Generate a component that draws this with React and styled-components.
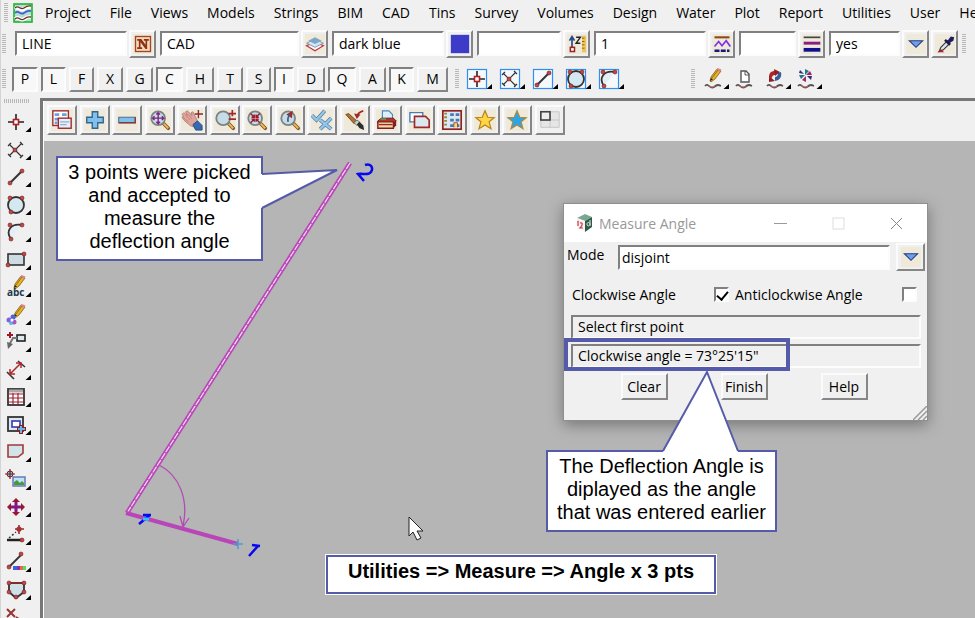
import React from 'react'
import styled, { createGlobalStyle, css } from 'styled-components'

const GlobalStyle = createGlobalStyle`
  * { box-sizing: border-box; }
  body {
    margin: 0;
    overflow: hidden;
    background: #f0f0f0;
    color: #000;
    font-family: 'Open Sans', 'Noto Sans', sans-serif;
    font-size: 14px;
  }
  button, input, select { font: inherit; color: inherit; }
`

const navy = '#555ba8'

const raised = css`
  border: 2px solid;
  border-color: #fbfbfb #868686 #868686 #fbfbfb;
  background: #f0f0f0;
`

const sunken = css`
  border: 2px solid;
  border-color: #808080 #fcfcfc #fcfcfc #808080;
`

const Screen = styled.div`
  height: 100vh;
  display: flex;
  flex-direction: column;
  border-left: 1px solid #d4d4d4;
`

const Grip = styled.span`
  flex: none;
  display: block;
  width: ${(p) => (p.$flat ? '25px' : '4px')};
  height: ${(p) => (p.$flat ? '4px' : '20px')};
  background: repeating-linear-gradient(${(p) => (p.$flat ? '90deg' : '180deg')}, #b8b8b8 0 1px, #f0f0f0 1px 2px);
`

const MenuBar = styled.nav`
  display: flex;
  align-items: center;
  height: 25px;
  padding-left: 3px;
  overflow: hidden;
`

const Logo = styled.svg`
  flex: none;
  margin: 0 12px 0 5px;
`

const MenuLink = styled.a`
  flex: none;
  margin-right: 19px;
  color: #000;
  text-decoration: none;
  line-height: 20px;
  white-space: nowrap;
`

const FieldBar = styled.div`
  display: flex;
  align-items: center;
  height: 37px;
  padding-left: 1px;
`

const FieldGroup = styled.div`
  flex: none;
  display: flex;
  align-items: center;
  gap: 2px;
  margin-left: 4px;
  &:first-of-type { margin-left: 9px; }
`

const Field = styled.input`
  ${sunken}
  width: ${(p) => p.$w};
  height: 25px;
  padding: 0 5px;
  background: #fff;
  outline: none;
`

const SelectField = styled.select`
  ${sunken}
  appearance: none;
  flex: ${(p) => (p.$w ? 'none' : '1')};
  width: ${(p) => p.$w || 'auto'};
  height: 25px;
  padding: 0 ${(p) => (p.$tight ? '2px' : '5px')};
  background: #fff;
  border-radius: 0;
  outline: none;
`

const IconButton = styled.button`
  ${raised}
  flex: none;
  display: flex;
  align-items: center;
  justify-content: center;
  width: 27px;
  height: 28px;
  padding: 0;
`

const KeyBar = styled.div`
  display: flex;
  align-items: center;
  height: 34px;
  padding-left: 1px;
`

const Keys = styled.div`
  display: flex;
  gap: 3px;
  margin: 0 7px 0 6px;
`

const Key = styled.button`
  ${raised}
  width: ${(p) => p.$w}px;
  height: 25px;
  padding: 0;
  line-height: 20px;
  &[aria-pressed='true'] {
    ${sunken}
    background: #f8f8f8;
  }
`

const ToolButton = styled.button`
  flex: none;
  display: flex;
  padding: 0;
  border: 0;
  background: none;
`

const SnapTools = styled.div`
  display: flex;
  gap: 5px;
  margin: 0 66px 0 6px;
`

const EditTools = styled.div`
  display: flex;
  gap: 3px;
  margin-left: 7px;
`

const Body = styled.div`
  flex: 1;
  display: flex;
  min-height: 0;
`

const SideBar = styled.aside`
  flex: none;
  width: 39px;
  padding: 3px 0 0 3px;
  overflow: hidden;
`

const SideTools = styled.div`
  display: flex;
  flex-direction: column;
  padding-top: 7px;

  ${ToolButton} { margin-bottom: 4px; }
  ${ToolButton}:nth-child(even) { margin-bottom: 3px; }
`

const ViewWindow = styled.main`
  flex: 1;
  display: flex;
  flex-direction: column;
  min-width: 0;
  margin-top: 2px;
  border: 3px solid #777;
  border-width: 3px 0 0 3px;
`

const ViewBar = styled.div`
  display: flex;
  height: 40px;
  padding: 4px 0 0 3px;
  border-left: 1px solid #fff;

  button { width: 30px; height: 30px; margin-right: 3px; }
  button:nth-child(even) { margin-right: 2px; }
`

const Canvas = styled.div`
  position: relative;
  flex: 1;
  border-left: 1px solid #fff;
  background: #b5b5b5;
`

const Drawing = styled.svg`
  position: absolute;
  left: 0;
  top: 0;
  width: 100%;
  height: 100%;
`

const Callout = styled.div`
  position: absolute;
  left: ${(p) => p.$x}px;
  top: ${(p) => p.$y}px;
  width: ${(p) => p.$w}px;
  padding: 3px 0 6px;
  border: 2px solid ${navy};
  background: #fff;
  color: #000;
  font: 20px/23px 'Liberation Sans', Arial, sans-serif;
  text-align: center;
`

const Pointer = styled.svg`
  position: absolute;
  left: ${(p) => p.$x}px;
  top: ${(p) => p.$y}px;
`

const Caption = styled(Callout)`
  padding: 1px 0 8px;
  outline: 1px solid #fff;
  font-weight: bold;
  line-height: 26px;
`

const Dialog = styled.section`
  position: absolute;
  left: 519px;
  top: 62px;
  width: 365px;
  border: 1px solid #8e8e8e;
  background: #f0f0f0;
  box-shadow: 0 4px 14px rgba(0, 0, 0, 0.35);
`

const TitleBar = styled.header`
  display: flex;
  align-items: center;
  height: 38px;
  padding-left: 12px;
  background: #fff;
  color: #999;
`

const Title = styled.h1`
  flex: 1;
  margin: 0 0 0 6px;
  font-size: 14px;
  font-weight: 400;
`

const WindowButton = styled.button`
  display: flex;
  justify-content: center;
  width: 58px;
  padding: 0;
  border: 0;
  background: none;
`

const ModeRow = styled.div`
  display: flex;
  align-items: center;
  gap: 6px;
  padding: 1px 2px 0 3px;

  label { width: 45px; padding-bottom: 6px; }
  button { width: 29px; }
`

const CheckRow = styled.div`
  display: flex;
  align-items: center;
  height: 44px;
  padding: 2px 10px 0 8px;
`

const CheckItem = styled.label`
  display: flex;
  align-items: center;
  justify-content: space-between;
  width: ${(p) => p.$w};
  margin-right: 6px;
  &:last-child { flex: 1; margin-right: 0; }
`

const Check = styled.input`
  ${sunken}
  appearance: none;
  width: 15px;
  height: 15px;
  margin: 0;
  background: #fff;
  &:checked::after {
    content: '';
    display: block;
    width: 5px;
    height: 9px;
    margin: 0 0 0 3px;
    border: solid #000;
    border-width: 0 2px 2px 0;
    transform: rotate(40deg);
  }
`

const Status = styled.output`
  ${sunken}
  display: block;
  height: 24px;
  margin: 0 6px 5px 7px;
  padding-left: 5px;
  line-height: 20px;
`

const Actions = styled.div`
  display: flex;
  justify-content: center;
  gap: 53px;
  padding: 0 3px 20px 0;
`

const ActionButton = styled.button`
  ${raised}
  width: 47px;
  height: 27px;
  padding: 0;
`

const Highlight = styled.div`
  position: absolute;
  left: 520px;
  top: 197px;
  width: 226px;
  height: 33px;
  border: 4px solid ${navy};
`

const ResizeCorner = styled.svg`
  position: absolute;
  right: 0;
  bottom: 0;
`

/* ---- icon drawings ---- */

const Dot = ({ x, y }) => <circle cx={x} cy={y} r="2" fill="#b84a4a" stroke="#7b1818" strokeWidth="0.6" />

const Glass = () => (
  <>
    <path d="M15 15l6 6" stroke="#8a5a20" strokeWidth="4" strokeLinecap="round" />
    <path d="M16 16l5 5" stroke="#e8b860" strokeWidth="2" />
    <circle cx="10" cy="10" r="7.500" fill="#c6dce6" stroke="#7b8486" strokeWidth="2" />
  </>
)

const Wave = () => (
  <>
    <path d="M3 19c3-4 5 4 9 1s5-2 7-1" stroke="#555" strokeWidth="1.800" fill="none" />
    <path d="M6 19c2 0 4 2 7 0" stroke="#d66" strokeWidth="1" fill="none" />
  </>
)

const Pencil = () => (
  <>
    <path d="M8 14l1-4 6-8 4 2-6 8-4 3z" fill="#e7b32b" stroke="#7c5b12" strokeWidth="0.8" />
    <path d="M14 3l1.500-2 4 1.500-1.500 2.500z" fill="#d9858b" />
    <path d="M10 11l6-8" stroke="#9a6d10" />
    <path d="M8 14l1-3 2 1.500z" fill="#222" />
  </>
)

const shapes = {
  point: (
    <>
      <path d="M12 4v16M4 12h16" stroke="#222" strokeWidth="1.600" />
      <rect x="9.500" y="9.500" width="5" height="5" fill="#fff" stroke="#b02020" strokeWidth="1.600" />
    </>
  ),
  cross: (
    <>
      <path d="M5 6l13 13M18 5L5 18M4 8l3-3M16 4l3 3M4 16l3 3M16 20l3-3" stroke="#333" strokeWidth="1.200" />
      <Dot x={11} y={12} />
    </>
  ),
  line: (
    <>
      <path d="M6 18L18 6" stroke="#333" strokeWidth="2" />
      <Dot x={6} y={18} />
      <Dot x={18} y={6} />
    </>
  ),
  circle: (
    <>
      <circle cx="12" cy="12" r="8" fill="#d5e7f0" stroke="#333" strokeWidth="1.800" />
      <Dot x={6} y={5} />
      <Dot x={18} y={5} />
      <Dot x={7} y={19} />
    </>
  ),
  arc: (
    <>
      <path d="M7 19C1 11 7 3 18 5" stroke="#333" strokeWidth="1.800" fill="#e3eff5" />
      <Dot x={6} y={5} />
      <Dot x={18} y={5} />
      <Dot x={7} y={19} />
    </>
  ),
  rect: (
    <>
      <rect x="4" y="6" width="16" height="11" fill="#cbdde2" stroke="#333" strokeWidth="1.600" />
      <Dot x={20} y={6} />
      <Dot x={4} y={17} />
    </>
  ),
  text: (
    <>
      <g transform="translate(2 -1)"><Pencil /></g>
      <text x="3" y="21" fontSize="10" fontWeight="700" fontFamily="Open Sans, sans-serif" fill="#24384c">abc</text>
    </>
  ),
  paint: (
    <>
      <g transform="translate(2 0)"><Pencil /></g>
      <circle cx="5" cy="17" r="2.500" fill="#8a5be0" />
      <circle cx="9" cy="14" r="2.500" fill="#4565d8" />
      <circle cx="10" cy="19" r="2.500" fill="#b050c8" />
      <circle cx="7" cy="20" r="2" fill="#50b8e0" />
      <circle cx="8" cy="17" r="1.500" fill="#fff" />
    </>
  ),
  leader: (
    <>
      <path d="M6 2v6M3 5h6" stroke="#a01828" strokeWidth="2" />
      <rect x="13" y="5" width="8" height="6" fill="#dceaf0" stroke="#222" strokeWidth="1.600" />
      <path d="M13 8H9l-4 7" stroke="#777" strokeWidth="2" fill="none" />
      <path d="M3 12l1 7 5-5z" fill="#666" />
    </>
  ),
  measure: (
    <>
      <path d="M3 14l7 7M14 3l7 6" stroke="#333" strokeWidth="1.600" />
      <path d="M7 15l9-9M6 11v5h5M12 5h5v5" stroke="#b02828" strokeWidth="1.500" fill="none" />
    </>
  ),
  table: (
    <>
      <rect x="4" y="4" width="16" height="16" fill="#fff" stroke="#333" strokeWidth="1.800" />
      <path d="M5 6h14" stroke="#aaa" strokeWidth="3" />
      <path d="M4 9h16M4 13h16M4 17h16M9 8v12M14 8v12" stroke="#a02030" strokeWidth="1.200" />
    </>
  ),
  insert: (
    <>
      <rect x="4" y="4" width="15" height="14" fill="#dce9f2" stroke="#333" strokeWidth="1.800" />
      <rect x="8" y="8" width="8" height="6" fill="#fff" stroke="#3838b0" strokeWidth="1.600" />
      <path d="M17 12v9M13 16h9" stroke="#8a2020" strokeWidth="4" />
      <path d="M17 13v7M14 16h7" stroke="#6db4e6" strokeWidth="2" />
    </>
  ),
  polygon: <path d="M4 5h15v8l-5 4H4z" fill="#d3e3ea" stroke="#a03a3a" strokeWidth="1.600" />,
  image: (
    <>
      <circle cx="6" cy="6" r="3" fill="#8ac4e0" stroke="#7a2222" />
      <path d="M6 1v10M1 6h10" stroke="#7a2222" strokeWidth="1.200" />
      <rect x="9" y="9" width="12" height="9" fill="#bfe3f5" stroke="#6a78b8" strokeWidth="1.500" />
      <path d="M10 17v-3l3-2 3 3 2-2 2 2v2z" fill="#479a3a" />
    </>
  ),
  move: (
    <>
      <path d="M12 5v14M5 12h14" stroke="#801880" strokeWidth="3" />
      <path d="M12 3l4 4H8zM12 21l4-4H8zM3 12l4-4v8zM21 12l-4-4v8z" fill="#9c1830" />
    </>
  ),
  snap: (
    <>
      <path d="M15 2v9M11 6h9" stroke="#a02828" strokeWidth="1.600" />
      <circle cx="15" cy="6" r="2" fill="none" stroke="#a02828" strokeWidth="1.200" />
      <path d="M5 15l7-6" stroke="#333" strokeWidth="1.500" strokeDasharray="2 2" />
      <path d="M3 17h16" stroke="#222" strokeWidth="2.500" />
      <Dot x={18} y={17} />
    </>
  ),
  colour: (
    <>
      <path d="M5 17L17 5" stroke="#333" strokeWidth="1.800" />
      <Dot x={5} y={17} />
      <Dot x={17} y={4} />
      <path d="M9 18h4" stroke="#3068e0" strokeWidth="4" />
      <path d="M13 18h3" stroke="#9428b0" strokeWidth="4" />
      <path d="M16 18h3" stroke="#f06840" strokeWidth="4" />
      <path d="M19 18h3" stroke="#50e060" strokeWidth="4" />
    </>
  ),
  shield: (
    <>
      <path d="M5 5h15v9l-8 6-7-6z" fill="#cfe1e8" stroke="#333" strokeWidth="1.800" />
      <path d="M4 5h16" stroke="#a02828" strokeWidth="1.500" />
      <Dot x={5} y={5} /><Dot x={20} y={5} /><Dot x={20} y={14} /><Dot x={12} y={19} /><Dot x={5} y={14} />
    </>
  ),
  remove: <path d="M3 4l8 8M11 4l-8 8M12 12l3 2" stroke="#963434" strokeWidth="2" />,
  drawWave: (<><Pencil /><Wave /></>),
  pageWave: (
    <>
      <path d="M8 4h5l3 3v8H8z" fill="#fff" stroke="#555" strokeWidth="1.400" />
      <path d="M12 4v4h4" stroke="#555" fill="none" />
      <Wave />
    </>
  ),
  cycleWave: (
    <>
      <path d="M5 10c0-4 2-6 6-6v4c-2 0-3 1-3 3z" fill="#a82828" />
      <path d="M17 5c1 5-1 8-6 9v-4c2 0 3-2 3-4z" fill="#355e9c" />
      <path d="M10 2l6 3-5 4z" fill="#902020" />
      <path d="M5 9l6 5-6 1z" fill="#902020" />
      <Wave />
    </>
  ),
  fanWave: (
    <>
      <path d="M10 8V2l4 2z" fill="#1a7a8a" /><path d="M11 8h6l-2-4z" fill="#a02860" />
      <path d="M11 9v6l-4-2z" fill="#a02860" /><path d="M10 8H4l2 4z" fill="#1a7a8a" />
      <path d="M12 9l4 4 1-4zM9 7L5 3 4 6z" fill="#302878" />
      <Wave />
    </>
  ),
}

const Tool = ({ name, box, menu = true }) => (
  <ToolButton aria-label={name}>
    <svg width="28" height="24" viewBox="0 0 28 24" fill="none">
      {box && <rect x="2.500" y="2.500" width="19" height="19" fill="#f6f9fc" stroke="#2f8ff0" strokeWidth="1.200" />}
      {shapes[name]}
      {menu && <path d="M27 17v5h-5.500z" fill="#000" />}
    </svg>
  </ToolButton>
)

const star = 'M12 2l3 7 7 .5-5.500 4.500 2 7.500-6.500-4-6.500 4 2-7.500L2 9.500 9 9z'

const viewIcons = {
  menus: (
    <>
      <rect x="2" y="2" width="17" height="16" fill="#fff" stroke="#a02828" strokeWidth="1.500" />
      <path d="M4 6h5M12 6h5M4 11h4M4 15h3" stroke="#6ba0d8" strokeWidth="3" />
      <rect x="8" y="10" width="14" height="11" fill="#e5f0fa" stroke="#a02828" strokeWidth="1.500" />
      <path d="M10 14h10M10 17h7" stroke="#8fb0d4" strokeWidth="1.500" />
    </>
  ),
  add: <path d="M9 3h6v6h6v6h-6v6H9v-6H3V9h6z" fill="#80c0ec" stroke="#34648c" strokeWidth="1.500" />,
  subtract: (<><path d="M3 9h18v6H3z" fill="#80c0ec" stroke="#4a7090" strokeWidth="1.200" /><path d="M3 15h18V9" stroke="#8a3838" strokeWidth="1.500" /></>),
  fit: (<><Glass /><path d="M10 4v12M4 10h12M8 6l2-2 2 2M8 14l2 2 2-2M6 8l-2 2 2 2M14 8l2 2-2 2" stroke="#802080" strokeWidth="1.500" /></>),
  pan: (
    <>
      <path d="M1 6l2-2 4 3-2-4 2-1 5 5-1-3 2-1 4 8 2 4-4 5-5-2-6-5-3-4 2-1z" fill="#e0a49c" stroke="#a87068" strokeWidth="0.800" />
      <path d="M5 7l5 5M8 6l4 5M2 9l6 5" stroke="#b87c72" strokeWidth="0.800" />
      <path d="M13 17l5-4 5 5v5h-7z" fill="#346ab0" stroke="#234a80" />
      <path d="M19 1v9M15 5.500h9" stroke="#8a2828" strokeWidth="1.500" />
    </>
  ),
  zoom: (<><Glass /><path d="M20 1v7M16 5h8M16 11h8" stroke="#a02828" strokeWidth="1.800" /></>),
  shrink: (<><Glass /><path d="M5 5l4 4M15 5l-4 4M5 15l4-4M15 15l-4-4M6 9h3V6M14 9h-3V6M6 11h3v3M14 11h-3v3" stroke="#a01828" strokeWidth="1.500" /></>),
  previous: (<><Glass /><path d="M8 6l7-4-1 8z" fill="#a02828" /><path d="M12 6c-2 2-3 4-2 8" stroke="#355e8c" strokeWidth="1.800" /></>),
  toggles: (<><path d="M1 7l5 5 9-10" stroke="#587898" strokeWidth="4" /><path d="M1 7l5 5 9-10" stroke="#8ec8f0" strokeWidth="2.500" /><path d="M10 12l12 10M22 10L10 22" stroke="#587898" strokeWidth="4" /><path d="M10 12l12 10M22 10L10 22" stroke="#8ec8f0" strokeWidth="2.500" /></>),
  brush: (
    <>
      <path d="M2 6l3-1 9 8-3 3z" fill="#b07038" stroke="#744818" />
      <path d="M11 15l3-3 3 2-3 4z" fill="#c8ccd0" stroke="#555" strokeWidth="0.800" />
      <path d="M14 17l3-3 4 4 1 5-5-2z" fill="#2c2c2c" />
      <path d="M21 2c-4 1-6 3-7 6" stroke="#a02828" strokeWidth="2" />
      <path d="M11 5l7 1-4 5z" fill="#a02828" />
    </>
  ),
  print: (
    <>
      <path d="M7 2h7l4 4v7H7z" fill="#dcefff" stroke="#4a88c0" strokeWidth="1.200" />
      <path d="M2 13l4-3h13l3 3-3 3H2z" fill="#b83030" stroke="#581818" />
      <path d="M2 14h17v7H2z" fill="#f0dca8" stroke="#801c1c" strokeWidth="1.500" />
      <path d="M19 15l3-3v6l-3 3z" fill="#802020" />
      <path d="M3 17h15" stroke="#a02828" strokeWidth="1.500" />
      <path d="M5 11h6" stroke="#5ab050" strokeWidth="1.500" />
    </>
  ),
  copy: (<><path d="M1 4h14v10H1z" fill="#fff" stroke="#487cb0" strokeWidth="1.500" /><path d="M6 8h12l4 4v8H6z" fill="#dce8ef" stroke="#a02828" strokeWidth="1.800" /></>),
  sheet: (<><rect x="2" y="2" width="20" height="20" fill="#d9e9f5" stroke="#902020" strokeWidth="1.800" /><path d="M5 4v16" stroke="#a08828" strokeWidth="3" strokeDasharray="2 2" /><path d="M10 6h4M16 6h4M10 12h4M16 12h4M10 18h4M16 18h4" stroke="#4f78a8" strokeWidth="3" /><path d="M14 20v-5h4v5" fill="#f0d880" stroke="#905030" /></>),
  star: <path d={star} fill="#fbd645" stroke="#b88018" strokeWidth="1.300" />,
  blueStar: <path d={star} fill="#2aa5e8" stroke="#b0883c" strokeWidth="1.300" />,
  layout: (<><path d="M2 3h20v17H2zM12 3v17M2 12h20" stroke="#c4c4c4" fill="#e6e6e6" /><rect x="2" y="3" width="10" height="9" fill="#ececec" stroke="#444" strokeWidth="1.800" /></>),
}

const fieldIcons = {
  name: (<><rect x="3" y="3" width="18" height="18" fill="#f5d8c0" stroke="#a8441c" strokeWidth="1.600" /><path d="M5 6h5l5 7V8h-2V6h6v2h-2v10h-2L9 10v6h2v2H5v-2h2V8H5z" fill="#8a3410" /></>),
  layers: (<><path d="M2 14l10 6 10-6-5-2H7z" fill="#fff" stroke="#c03040" strokeWidth="1.500" /><path d="M2 11l10 5 10-5-10-5z" fill="#d5e6f3" stroke="#6f8aa0" /><path d="M4 8l8 4 8-4-8-4z" fill="#7fa5c8" /></>),
  swatch: <rect x="1" y="1" width="22" height="22" fill="#3c3cc8" />,
  height: (<><path d="M6 16V4M3 8l3-5 3 5" stroke="#28488c" strokeWidth="2" /><rect x="4" y="16" width="5" height="5" fill="#fff" stroke="#a02020" strokeWidth="1.800" /><path d="M11 4h5l-5 7h5" stroke="#222" strokeWidth="1.800" /><path d="M18 2h5v20h-5z" fill="#eec55c" /><path d="M18 5h3M18 9h3M18 13h3M18 17h3" stroke="#745410" /></>),
  style: (<><path d="M3 4h18" stroke="#8a4818" strokeWidth="2.500" /><path d="M3 15l5-6 4 5 5-6 5 7" stroke="#8030e8" strokeWidth="2" /><path d="M3 20h18" stroke="#181878" strokeWidth="3" strokeDasharray="6 1.500" /></>),
  weight: (<><path d="M2 4h20" stroke="#444" strokeWidth="2" /><path d="M2 11h20" stroke="#8c1c88" strokeWidth="3.500" /><path d="M2 19h20" stroke="#10108c" strokeWidth="4.500" /></>),
  down: <path d="M4 8h16l-8 8z" fill="#6aa0ee" stroke="#283c80" strokeWidth="1.300" />,
  picker: (<><path d="M5 21l2-5 8-8 3 3-8 8z" fill="#dce6ec" stroke="#333" strokeWidth="1.300" /><path d="M12 7l6 6" stroke="#1b1b50" strokeWidth="3" /><path d="M15 8l4-5 4 1-1 4-5 3z" fill="#1d1d60" /><path d="M3 22h8l-4-4z" fill="#a02828" /></>),
}

const Glyph = ({ children, size = 20, ground }) => (
  <svg width={size} height={size} viewBox="0 0 24 24" fill="none">
    {ground && <rect width="24" height="24" fill="#eee9d8" />}
    {children}
  </svg>
)

const menus = ['Project', 'File', 'Views', 'Models', 'Strings', 'BIM', 'CAD', 'Tins', 'Survey', 'Volumes', 'Design', 'Water', 'Plot', 'Report', 'Utilities', 'User', 'Help']

const fields = [
  { label: 'Name', value: 'LINE', w: '112px', icon: 'name' },
  { label: 'Model', value: 'CAD', w: '139px', icon: 'layers' },
  { label: 'Colour', value: 'dark blue', w: '112px', icon: 'swatch' },
  { label: 'Height', value: '', w: '84px', icon: 'height' },
  { label: 'Line style', value: '1', w: '112px', icon: 'style' },
  { label: 'Weight', value: '', w: '57px', icon: 'weight' },
]

const keys = [
  ['P', 26, true], ['L', 25, true], ['F', 25], ['X', 26], ['G', 27], ['C', 27, true], ['H', 28], ['T', 26],
  ['S', 25], ['I', 20, true], ['D', 28], ['Q', 28, true], ['A', 27], ['K', 25, true], ['M', 31],
]

const sideTools = ['point', 'cross', 'line', 'circle', 'arc', 'rect', 'text', 'paint', 'leader', 'measure', 'table', 'insert', 'polygon', 'image', 'move', 'snap', 'colour', 'shield', 'remove']

const MeasureDialog = () => (
  <Dialog aria-label="Measure Angle">
    <TitleBar>
      <svg width="17" height="20" viewBox="0 0 17 20">
        <path d="M1 5l8-4 7 3-7 4z" fill="#7da594" />
        <path d="M9 8l7-4v10l-7 5z" fill="#2f5a48" />
        <path d="M1 5l8 3v11l-8-5z" fill="#f4f4f4" />
        <path d="M2 8v5M1.500 9L2.500 8M4 10c3-1 3 2 0 5h3" stroke="#d03040" strokeWidth="1.200" fill="none" />
        <path d="M14 7v6M11 11c0-2 3-2 3 0s-3 3-3 0" stroke="#dfe9e4" fill="none" />
      </svg>
      <Title>Measure Angle</Title>
      <WindowButton aria-label="Minimise"><svg width="17" height="13"><path d="M0 6.500h13" stroke="#999" /></svg></WindowButton>
      <WindowButton aria-label="Maximise"><svg width="17" height="13"><rect x="1" y="1" width="11" height="11" fill="none" stroke="#ddd" /></svg></WindowButton>
      <WindowButton aria-label="Close"><svg width="17" height="13"><path d="M1 1l11 11M12 1L1 12" stroke="#888" /></svg></WindowButton>
    </TitleBar>
    <ModeRow>
      <label htmlFor="mode">Mode</label>
      <SelectField id="mode" $tight><option>disjoint</option></SelectField>
      <IconButton aria-label="Choose mode"><Glyph ground>{fieldIcons.down}</Glyph></IconButton>
    </ModeRow>
    <CheckRow>
      <CheckItem $w="157px">Clockwise Angle<Check type="checkbox" defaultChecked /></CheckItem>
      <CheckItem>Anticlockwise Angle<Check type="checkbox" /></CheckItem>
    </CheckRow>
    <Status>Select first point</Status>
    <Status>Clockwise angle = 73°25'15"</Status>
    <Actions>
      <ActionButton>Clear</ActionButton>
      <ActionButton>Finish</ActionButton>
      <ActionButton>Help</ActionButton>
    </Actions>
    <ResizeCorner width="14" height="14"><path d="M0 14L14 0M5 14l9-9M10 14l4-4" stroke="#999" strokeWidth="1.500" /></ResizeCorner>
  </Dialog>
)

export default function App() {
  return (
    <Screen>
      <GlobalStyle />
      <MenuBar>
        <Grip />
        <Logo width="20" height="20" viewBox="0 0 20 20" fill="none">
          <rect x="1" y="1" width="18" height="18" fill="#b9dcd8" stroke="#18b828" strokeWidth="1.600" />
          <path d="M2 6c4-4 5 3 9 0s5-2 7-2M2 16c4-4 5 3 9 0s5-2 7-2" stroke="#fff" strokeWidth="3.500" />
          <path d="M2 5c4-4 5 3 9 0s5-2 7-2" stroke="#6a3028" strokeWidth="1.400" />
          <path d="M2 10c4-4 5 3 9 0s5-2 7-2" stroke="#4060c8" strokeWidth="1.600" />
          <path d="M2 16c4-4 5 3 9 0s5-2 7-2" stroke="#6a3028" strokeWidth="1.400" />
        </Logo>
        {menus.map((name) => <MenuLink key={name} href="#">{name}</MenuLink>)}
      </MenuBar>

      <FieldBar>
        <Grip />
        {fields.map((f) => (
          <FieldGroup key={f.label}>
            <Field aria-label={f.label} defaultValue={f.value} $w={f.w} />
            <IconButton aria-label={`Choose ${f.label}`}>
              <Glyph ground={f.icon !== 'swatch'}>{fieldIcons[f.icon]}</Glyph>
            </IconButton>
          </FieldGroup>
        ))}
        <FieldGroup>
          <SelectField aria-label="Tinable" $w="71px"><option>yes</option></SelectField>
          <IconButton aria-label="Choose tinable"><Glyph ground>{fieldIcons.down}</Glyph></IconButton>
          <IconButton aria-label="Pick properties"><Glyph ground>{fieldIcons.picker}</Glyph></IconButton>
        </FieldGroup>
        <FieldGroup><Grip /></FieldGroup>
      </FieldBar>

      <KeyBar>
        <Grip />
        <Keys>
          {keys.map(([k, w, on]) => <Key key={k} $w={w} aria-pressed={!!on}>{k}</Key>)}
        </Keys>
        <Grip />
        <SnapTools>
          {['point', 'cross', 'line', 'circle', 'arc'].map((n) => <Tool key={n} name={n} box />)}
        </SnapTools>
        <Grip />
        <EditTools>
          <Tool name="drawWave" />
          <Tool name="pageWave" menu={false} />
          <Tool name="cycleWave" />
          <Tool name="fanWave" />
        </EditTools>
      </KeyBar>

      <Body>
        <SideBar>
          <Grip $flat />
          <SideTools>
            {sideTools.map((n) => <Tool key={n} name={n} menu={n !== 'remove'} />)}
          </SideTools>
        </SideBar>
        <ViewWindow>
          <ViewBar>
            {Object.keys(viewIcons).map((n) => (
              <IconButton key={n} aria-label={n}><Glyph size={22} ground={n !== 'layout'}>{viewIcons[n]}</Glyph></IconButton>
            ))}
          </ViewBar>
          <Canvas>
            <Drawing fill="none">
              <path d="M306 22L83 372" stroke="#b846b8" strokeWidth="4.500" />
              <path d="M306 22L83 372" stroke="#f4dcf4" strokeWidth="1.200" strokeDasharray="7 1" />
              <path d="M82 372l112 31" stroke="#b846b8" strokeWidth="4" />
              <path d="M115 324c20 10 30 34 24 61M136 375l3 11 6-9" stroke="#b04cb4" strokeWidth="1.300" />
              <path d="M194 398v10M189 403h10" stroke="#48a0cc" strokeWidth="1.500" />
              <path d="M95 383l11-9M99 374l8 0" stroke="#0808f0" strokeWidth="2.500" />
              <path d="M99 378h6" stroke="#20c8ff" strokeWidth="3" />
              <path d="M205 415l9-10M208 404l8 1" stroke="#0808f0" strokeWidth="2.500" />
              <path d="M320 40l-6-7c5-1 10 2 13-2 3-5-1-9-6-7" stroke="#0808f0" strokeWidth="2.500" />
              <path d="M365 376v19l4-4 4 8 4-2-4-7h6z" fill="#fff" stroke="#222" />
            </Drawing>

            <Callout $x={12} $y={15} $w={207}>
              3 points were picked<br />and accepted to<br />measure the<br />deflection angle
              <Pointer $x={203} $y={9} width="82" height="48">
                <path d="M0 7h1L76 3 1 41H0z" fill="#fff" />
                <path d="M1 7L76 3 1 41" fill="none" stroke={navy} strokeWidth="2" />
              </Pointer>
            </Callout>

            <MeasureDialog />
            <Highlight />

            <Callout $x={502} $y={309} $w={231}>
              The Deflection Angle is<br />diplayed as the angle<br />that was entered earlier
              <Pointer $x={113} $y={-83} width="80" height="85">
                <path d="M2 85v-3L46 3l31 79v3z" fill="#fff" />
                <path d="M2 82L46 3l31 79" fill="none" stroke={navy} strokeWidth="2" />
              </Pointer>
            </Callout>

            <Caption $x={282} $y={414} $w={390}>Utilities =&gt; Measure =&gt; Angle x 3 pts</Caption>
          </Canvas>
        </ViewWindow>
      </Body>
    </Screen>
  )
}
